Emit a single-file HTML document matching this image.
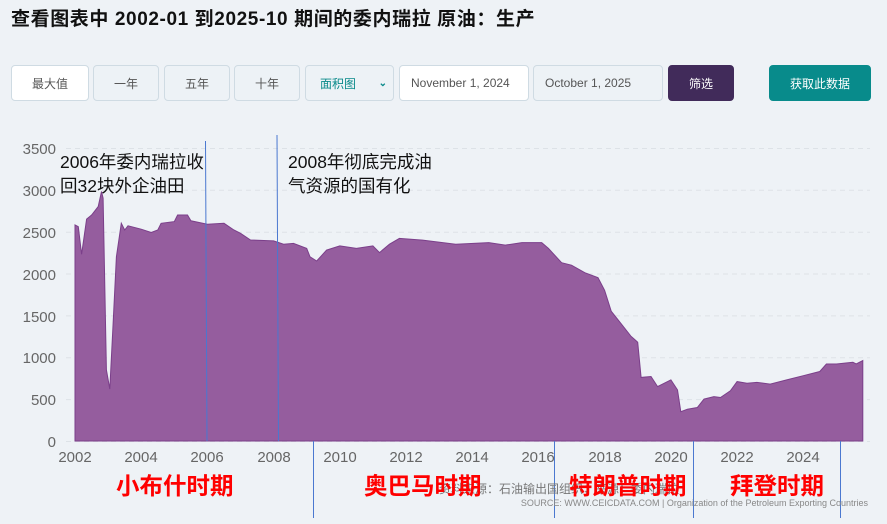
<!DOCTYPE html>
<html><head><meta charset="utf-8"><style>
*{margin:0;padding:0;box-sizing:border-box}
body{width:887px;height:524px;background:#eef2f6;font-family:"Liberation Sans","Noto Sans CJK SC",sans-serif;position:relative;overflow:hidden}
h1{position:absolute;left:11px;top:4px;font-size:19px;font-weight:bold;color:#111;white-space:nowrap;letter-spacing:0.6px}
.b{position:absolute;top:65px;height:36px;border:1px solid #cfdbe3;border-radius:4px;font-size:12px;color:#555;display:flex;align-items:center;justify-content:center;background:#edf2f6}
svg{position:absolute;left:0;top:0}
.red{position:absolute;top:467px;font-size:23.5px;font-weight:bold;color:#f00;white-space:nowrap}
</style></head><body>
<h1>查看图表中 2002-01 到2025-10 期间的委内瑞拉 原油：生产</h1>
<div class="b" style="left:11px;width:78px;background:#fff">最大值</div>
<div class="b" style="left:93px;width:66px">一年</div>
<div class="b" style="left:164px;width:66px">五年</div>
<div class="b" style="left:234px;width:66px">十年</div>
<div class="b" style="left:305px;width:89px;justify-content:space-between;padding:0 6px 0 14px;color:#0a8a8a">面积图<span style="font-size:10px;font-weight:bold">⌄</span></div>
<div class="b" style="left:399px;width:130px;background:#fff;justify-content:flex-start;padding-left:11px">November 1, 2024</div>
<div class="b" style="left:533px;width:130px;justify-content:flex-start;padding-left:11px">October 1, 2025</div>
<div class="b" style="left:668px;width:66px;background:#412b5a;color:#fff;border-color:#412b5a">筛选</div>
<div class="b" style="left:769px;width:102px;background:#088b8b;color:#fff;border-color:#088b8b">获取此数据</div>
<svg width="887" height="524" font-family="Liberation Sans,sans-serif">
<g stroke="#dde2e7" stroke-dasharray="5,4">
<line x1="66" x2="870" y1="148.5" y2="148.5"/><line x1="66" x2="870" y1="190.3" y2="190.3"/><line x1="66" x2="870" y1="232.2" y2="232.2"/><line x1="66" x2="870" y1="274" y2="274"/><line x1="66" x2="870" y1="315.9" y2="315.9"/><line x1="66" x2="870" y1="357.7" y2="357.7"/><line x1="66" x2="870" y1="399.6" y2="399.6"/><line x1="66" x2="870" y1="441.5" y2="441.5"/>
</g>
<g font-size="15" fill="#666" text-anchor="end">
<text x="56" y="154">3500</text><text x="56" y="196">3000</text><text x="56" y="238">2500</text><text x="56" y="280">2000</text><text x="56" y="322">1500</text><text x="56" y="363">1000</text><text x="56" y="405">500</text><text x="56" y="447">0</text>
</g>
<g font-size="15" fill="#666" text-anchor="middle">
<text x="75" y="462">2002</text><text x="141" y="462">2004</text><text x="207" y="462">2006</text><text x="274" y="462">2008</text><text x="340" y="462">2010</text><text x="406" y="462">2012</text><text x="472" y="462">2014</text><text x="538" y="462">2016</text><text x="605" y="462">2018</text><text x="671" y="462">2020</text><text x="737" y="462">2022</text><text x="803" y="462">2024</text>
</g>
<path fill="#955d9e" stroke="#7b3f8a" stroke-width="1" d="M75,225 78.3,226.7 81.6,254.3 86.6,219.1 91.6,215 98.2,206.6 101.5,191.5 103.1,198.2 106.4,369.8 109.8,389.1 113.1,323.8 116.4,256.8 121.3,223.3 124.7,230 128,225.8 141.2,229.2 151.2,232.5 157.8,230 161.1,223.3 174.3,221.6 177.6,215 187.5,215 190.9,220.8 207.4,224.2 224,223.3 233.9,230 240.5,233.3 250.5,240 273.6,240.9 283.6,244.2 293.5,243.4 306.7,248.4 310,256.8 316.7,261 326.6,250.1 339.8,245.9 356.4,248.4 372.9,245.9 379.5,252.6 389.5,244.2 399.4,238.4 422.6,240.1 455.7,244.2 488.8,242.6 505.3,245.1 521.9,242.6 541.7,242.6 548.4,248.4 561.6,262.7 571.5,265.2 584.8,272.7 598,277.7 604.6,290.3 611.2,311.2 621.2,323.8 631.1,336.4 637.7,342.2 641.1,377.4 651,376.5 657.6,386.6 670.9,379.9 677.5,389.9 680.8,411.7 687.4,409.2 697.3,407.5 704,399.1 713.9,396.6 720.5,397.5 730.4,390.8 737.1,381.6 747,383.2 756.9,382.4 770.2,384.1 786.7,379.9 803.3,375.7 819.8,371.5 826.4,364 836.4,364 852.9,362.3 856.2,364 862.8,360.6 862.8,441 75,441Z"/>
<g stroke="#4a78d0" stroke-width="1">
<line x1="205.5" y1="141" x2="207" y2="441"/><line x1="277" y1="135" x2="278.5" y2="441"/>
<line x1="313.5" y1="441" x2="313.5" y2="518"/><line x1="554.5" y1="441" x2="554.5" y2="518"/><line x1="693.5" y1="441" x2="693.5" y2="518"/><line x1="840.5" y1="441" x2="840.5" y2="518"/>
</g>
<g font-size="17.5" fill="#111" font-family="Liberation Sans,Noto Sans CJK SC,sans-serif">
<text x="60" y="168">2006年委内瑞拉收</text><text x="60" y="192">回32块外企油田</text>
<text x="288" y="168">2008年彻底完成油</text><text x="288" y="192">气资源的国有化</text>
</g>
<text x="439" y="493" font-size="12" fill="#777" font-family="Liberation Sans,Noto Sans CJK SC,sans-serif">资料来源：石油输出国组织；来源：委内瑞拉</text>
<text x="868" y="506" font-size="9" fill="#888" text-anchor="end">SOURCE: WWW.CEICDATA.COM | Organization of the Petroleum Exporting Countries</text>
</svg>
<div class="red" style="left:116px">小布什时期</div>
<div class="red" style="left:364px">奥巴马时期</div>
<div class="red" style="left:569px">特朗普时期</div>
<div class="red" style="left:730px">拜登时期</div>
</body></html>
